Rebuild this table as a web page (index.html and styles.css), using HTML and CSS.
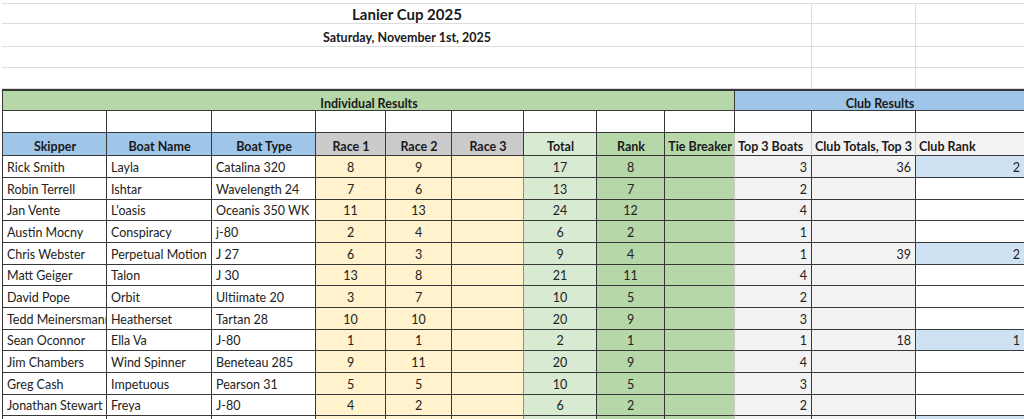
FILE: index.html
```html
<!DOCTYPE html>
<html lang="en">
<head>
<meta charset="utf-8">
<title>Lanier Cup 2025</title>
<link rel="stylesheet" href="styles.css">
</head>
<body>
<div class="sheet">
  <div class="c t merge-title title">Lanier Cup 2025</div>
  <div class="c t"></div>
  <div class="c t last"></div>

  <div class="c t merge-title subtitle">Saturday, November 1st, 2025</div>
  <div class="c t"></div>
  <div class="c t last"></div>

  <div class="c t merge-title"></div>
  <div class="c t"></div>
  <div class="c t last"></div>

  <div class="c t merge-title"></div>
  <div class="c t"></div>
  <div class="c t last"></div>

  <div class="c band first band-ind">Individual Results</div>
  <div class="c band band-club last">Club Results</div>

  <div class="c first"></div>
  <div class="c"></div>
  <div class="c"></div>
  <div class="c"></div>
  <div class="c"></div>
  <div class="c"></div>
  <div class="c"></div>
  <div class="c"></div>
  <div class="c"></div>
  <div class="c"></div>
  <div class="c"></div>
  <div class="c last"></div>

  <div class="c h first hblue ctr">Skipper</div>
  <div class="c h hblue ctr">Boat Name</div>
  <div class="c h hblue ctr">Boat Type</div>
  <div class="c h hgray ctr">Race 1</div>
  <div class="c h hgray ctr">Race 2</div>
  <div class="c h hgray ctr">Race 3</div>
  <div class="c h tot ctr">Total</div>
  <div class="c h rnk ctr">Rank</div>
  <div class="c h tie ctr soft">Tie Breaker</div>
  <div class="c h club soft">Top 3 Boats</div>
  <div class="c h club soft">Club Totals, Top 3</div>
  <div class="c h club last">Club Rank</div>

  <div class="c d first">Rick Smith</div><div class="c d">Layla</div><div class="c d">Catalina 320</div>
  <div class="c d yel ctr">8</div><div class="c d yel ctr">9</div><div class="c d yel mid"></div>
  <div class="c d tot ctr">17</div><div class="c d rnk ctr">8</div><div class="c d tie soft"></div>
  <div class="c d club rt">3</div><div class="c d club rt">36</div><div class="c d crk rt last">2</div>

  <div class="c d first">Robin Terrell</div><div class="c d">Ishtar</div><div class="c d">Wavelength 24</div>
  <div class="c d yel ctr">7</div><div class="c d yel ctr">6</div><div class="c d yel mid"></div>
  <div class="c d tot ctr">13</div><div class="c d rnk ctr">7</div><div class="c d tie soft"></div>
  <div class="c d club rt">2</div><div class="c d club rt"></div><div class="c d last"></div>

  <div class="c d first">Jan Vente</div><div class="c d">L'oasis</div><div class="c d">Oceanis 350 WK</div>
  <div class="c d yel ctr">11</div><div class="c d yel ctr">13</div><div class="c d yel mid"></div>
  <div class="c d tot ctr">24</div><div class="c d rnk ctr">12</div><div class="c d tie soft"></div>
  <div class="c d club rt">4</div><div class="c d club rt"></div><div class="c d last"></div>

  <div class="c d first">Austin Mocny</div><div class="c d">Conspiracy</div><div class="c d">j-80</div>
  <div class="c d yel ctr">2</div><div class="c d yel ctr">4</div><div class="c d yel mid"></div>
  <div class="c d tot ctr">6</div><div class="c d rnk ctr">2</div><div class="c d tie soft"></div>
  <div class="c d club rt">1</div><div class="c d club rt"></div><div class="c d last"></div>

  <div class="c d first">Chris Webster</div><div class="c d">Perpetual Motion</div><div class="c d">J 27</div>
  <div class="c d yel ctr">6</div><div class="c d yel ctr">3</div><div class="c d yel mid"></div>
  <div class="c d tot ctr">9</div><div class="c d rnk ctr">4</div><div class="c d tie soft"></div>
  <div class="c d club rt">1</div><div class="c d club rt">39</div><div class="c d crk rt last">2</div>

  <div class="c d first">Matt Geiger</div><div class="c d">Talon</div><div class="c d">J 30</div>
  <div class="c d yel ctr">13</div><div class="c d yel ctr">8</div><div class="c d yel mid"></div>
  <div class="c d tot ctr">21</div><div class="c d rnk ctr">11</div><div class="c d tie soft"></div>
  <div class="c d club rt">4</div><div class="c d club rt"></div><div class="c d last"></div>

  <div class="c d first">David Pope</div><div class="c d">Orbit</div><div class="c d">Ultiimate 20</div>
  <div class="c d yel ctr">3</div><div class="c d yel ctr">7</div><div class="c d yel mid"></div>
  <div class="c d tot ctr">10</div><div class="c d rnk ctr">5</div><div class="c d tie soft"></div>
  <div class="c d club rt">2</div><div class="c d club rt"></div><div class="c d last"></div>

  <div class="c d first">Tedd Meinersmann</div><div class="c d">Heatherset</div><div class="c d">Tartan 28</div>
  <div class="c d yel ctr">10</div><div class="c d yel ctr">10</div><div class="c d yel mid"></div>
  <div class="c d tot ctr">20</div><div class="c d rnk ctr">9</div><div class="c d tie soft"></div>
  <div class="c d club rt">3</div><div class="c d club rt"></div><div class="c d last"></div>

  <div class="c d first">Sean Oconnor</div><div class="c d">Ella Va</div><div class="c d">J-80</div>
  <div class="c d yel ctr">1</div><div class="c d yel ctr">1</div><div class="c d yel mid"></div>
  <div class="c d tot ctr">2</div><div class="c d rnk ctr">1</div><div class="c d tie soft"></div>
  <div class="c d club rt">1</div><div class="c d club rt">18</div><div class="c d crk rt last">1</div>

  <div class="c d first">Jim Chambers</div><div class="c d">Wind Spinner</div><div class="c d">Beneteau 285</div>
  <div class="c d yel ctr">9</div><div class="c d yel ctr">11</div><div class="c d yel mid"></div>
  <div class="c d tot ctr">20</div><div class="c d rnk ctr">9</div><div class="c d tie soft"></div>
  <div class="c d club rt">4</div><div class="c d club rt"></div><div class="c d last"></div>

  <div class="c d first">Greg Cash</div><div class="c d">Impetuous</div><div class="c d">Pearson 31</div>
  <div class="c d yel ctr">5</div><div class="c d yel ctr">5</div><div class="c d yel mid"></div>
  <div class="c d tot ctr">10</div><div class="c d rnk ctr">5</div><div class="c d tie soft"></div>
  <div class="c d club rt">3</div><div class="c d club rt"></div><div class="c d last"></div>

  <div class="c d first">Jonathan Stewart</div><div class="c d">Freya</div><div class="c d">J-80</div>
  <div class="c d yel ctr">4</div><div class="c d yel ctr">2</div><div class="c d yel mid"></div>
  <div class="c d tot ctr">6</div><div class="c d rnk ctr">2</div><div class="c d tie soft"></div>
  <div class="c d club rt">2</div><div class="c d club rt"></div><div class="c d last"></div>

  <div class="c d first"></div><div class="c d"></div><div class="c d"></div>
  <div class="c d yel"></div><div class="c d yel"></div><div class="c d yel mid"></div>
  <div class="c d tot"></div><div class="c d rnk"></div><div class="c d tie soft"></div>
  <div class="c d club"></div><div class="c d club"></div><div class="c d crk last"></div>
</div>
</body>
</html>
```

FILE: styles.css
```css
html, body {
  margin: 0;
  padding: 0;
  overflow: hidden;
  background: #ffffff;
}

body {
  font-family: Lato, "Liberation Sans", sans-serif;
  color: #222222;
}

.sheet {
  display: grid;
  grid-template-columns: 105px 105px 104px 70px 66px 72px 73px 68px 70px 77px 104px 108px;
  grid-template-rows: 20px 23px 21px 21px 22px 22px 23px repeat(4, 22px 22px 21px) 22px;
  margin: 3px 0 0 2px;
  border-top: 1px solid #dcdcdc;
}

.c {
  box-sizing: border-box;
  border-right: 1px solid #383838;
  border-bottom: 1px solid #383838;
  display: flex;
  align-items: flex-end;
  padding: 0 3px 2px 4px;
  font-size: 12.5px;
  line-height: 15px;
  white-space: nowrap;
  overflow: hidden;
  min-width: 0;
}

.c.last { border-right: none; }
.c.first { border-left: 1px solid #383838; }

/* title rows */
.c.t {
  border-right: 1px solid #dcdcdc;
  border-bottom: 1px solid #dcdcdc;
  justify-content: center;
}
.c.t.last { border-right: none; }

.merge-title { grid-column: 1 / 11; }

.title {
  font-size: 15px;
  font-weight: 700;
  padding-bottom: 1px;
  color: #1a1a1a;
}

.subtitle {
  font-size: 12.5px;
  font-weight: 700;
  padding-bottom: 1px;
  color: #1a1a1a;
}

/* section band */
.band {
  border-top: 2px solid #383838;
  justify-content: center;
  font-weight: 700;
  font-size: 12.5px;
  line-height: 13px;
  color: #1a1a1a;
  padding-bottom: 0;
}
.band-ind {
  grid-column: 1 / 10;
  background: #b6d7a8;
}
.band-club {
  grid-column: 10 / 13;
  background: #9fc5e8;
}

/* header row */
.h {
  font-weight: 700;
  font-size: 12.5px;
  color: #1a1a1a;
  padding-bottom: 1px;
}

.hblue { background: #9fc5e8; }
.hgray { background: #cacaca; }

/* cells */
.ctr { justify-content: center; }
.rt { justify-content: flex-end; }

.yel { background: #fff2cc; }
.yel.mid { border-right-color: #8f8f8f; }
.tot { background: #d9ead3; }
.rnk { background: #b6d7a8; }
.tie { background: #b6d7a8; }
.soft { border-right-color: #c8c8c8; }
.club { background: #f2f2f2; }
.h.club { padding-left: 3px; }
.crk { background: #cfe2f3; }

.d { padding-right: 4px; }
```
